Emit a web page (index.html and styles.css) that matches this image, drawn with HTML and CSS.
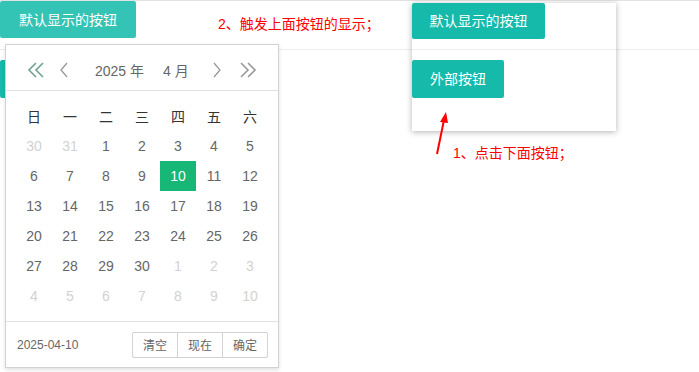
FILE: index.html
```html
<!DOCTYPE html>
<html lang="zh-CN">
<head>
<meta charset="utf-8">
<title>laydate</title>
<link rel="stylesheet" href="styles.css">
</head>
<body>
<div class="page">
  <div class="top-row">
    <button class="btn btn-hover">默认显示的按钮</button>
    <span class="note note-2">2、触发上面按钮的显示；</span>
  </div>
  <div class="content">
    <button class="btn">外部按钮</button>
  </div>
</div>

<div class="popup">
  <div class="popup-top"><button class="btn btn-short">默认显示的按钮</button></div>
  <div class="popup-body"><button class="btn">外部按钮</button></div>
</div>

<svg class="arrow" width="20" height="50" viewBox="0 0 20 50">
  <line x1="3" y1="46" x2="10" y2="12" stroke="#ff0000" stroke-width="2"/>
  <polygon points="12,4 6,14 14,15" fill="#ff0000"/>
</svg>
<span class="note note-1">1、点击下面按钮；</span>

<div class="laydate">
  <div class="ld-header">
    <span class="ld-icon ld-prev-y">
      <svg width="18" height="16" viewBox="0 0 18 16"><polyline points="9,1 2,8 9,15" fill="none" stroke="#6fa28f" stroke-width="1.6"/><polyline points="16,1 9,8 16,15" fill="none" stroke="#6fa28f" stroke-width="1.6"/></svg>
    </span>
    <span class="ld-icon ld-prev-m">
      <svg width="10" height="16" viewBox="0 0 10 16"><polyline points="8,1 2,8 8,15" fill="none" stroke="#999" stroke-width="1.3"/></svg>
    </span>
    <span class="ld-title"><span class="ld-y">2025 年</span><span class="ld-m">4 月</span></span>
    <span class="ld-icon ld-next-m">
      <svg width="10" height="16" viewBox="0 0 10 16"><polyline points="2,1 8,8 2,15" fill="none" stroke="#999" stroke-width="1.3"/></svg>
    </span>
    <span class="ld-icon ld-next-y">
      <svg width="18" height="16" viewBox="0 0 18 16"><polyline points="2,1 9,8 2,15" fill="none" stroke="#999" stroke-width="1.6"/><polyline points="9,1 16,8 9,15" fill="none" stroke="#999" stroke-width="1.6"/></svg>
    </span>
  </div>
  <div class="ld-content">
    <div class="ld-grid">
      <span class="wk">日</span><span class="wk">一</span><span class="wk">二</span><span class="wk">三</span><span class="wk">四</span><span class="wk">五</span><span class="wk">六</span>
      <span class="d off">30</span><span class="d off">31</span><span class="d">1</span><span class="d">2</span><span class="d">3</span><span class="d">4</span><span class="d">5</span>
      <span class="d">6</span><span class="d">7</span><span class="d">8</span><span class="d">9</span><span class="d sel">10</span><span class="d">11</span><span class="d">12</span>
      <span class="d">13</span><span class="d">14</span><span class="d">15</span><span class="d">16</span><span class="d">17</span><span class="d">18</span><span class="d">19</span>
      <span class="d">20</span><span class="d">21</span><span class="d">22</span><span class="d">23</span><span class="d">24</span><span class="d">25</span><span class="d">26</span>
      <span class="d">27</span><span class="d">28</span><span class="d">29</span><span class="d">30</span><span class="d off">1</span><span class="d off">2</span><span class="d off">3</span>
      <span class="d off">4</span><span class="d off">5</span><span class="d off">6</span><span class="d off">7</span><span class="d off">8</span><span class="d off">9</span><span class="d off">10</span>
    </div>
  </div>
  <div class="ld-footer">
    <span class="ld-value">2025-04-10</span>
    <div class="ld-btns">
      <span class="ld-btn">清空</span><span class="ld-btn">现在</span><span class="ld-btn">确定</span>
    </div>
  </div>
</div>
</body>
</html>
```

FILE: styles.css
```css
* { box-sizing: border-box; }
html, body { margin: 0; padding: 0; background: #fff; }
body {
  font-family: "Liberation Sans", "Noto Sans CJK SC", sans-serif;
  font-size: 14px;
  color: #333;
  width: 699px;
  height: 372px;
  overflow: hidden;
  position: relative;
}
.page { border-top: 1px solid #e2e2e2; }
.top-row {
  display: flex;
  align-items: flex-start;
  height: 49px;
  border-bottom: 1px solid #eeeeee;
}
.btn {
  display: inline-flex;
  align-items: center;
  justify-content: center;
  height: 38px;
  padding: 0 18px;
  border: none;
  border-radius: 2px;
  background: #16baaa;
  color: #fff;
  font-family: inherit;
  font-size: 14px;
  line-height: 1;
  white-space: nowrap;
  cursor: pointer;
}
.btn-hover { background: #33c4b6; width: 136px; height: 37px; }
.btn-short { height: 36px; width: 133px; }
.note { color: #ff0000; font-size: 14px; line-height: 16px; white-space: nowrap; }
.note-2 { margin-left: 82px; margin-top: 15px; }
.content { padding-top: 10px; }

.popup {
  position: absolute;
  left: 412px;
  top: 3px;
  width: 204px;
  height: 128px;
  background: #fff;
  box-shadow: 0 1px 6px rgba(0,0,0,0.3);
}
.popup-top { height: 47px; border-bottom: 1px solid #eeeeee; }
.popup-body { padding-top: 10px; }

.arrow { position: absolute; left: 434px; top: 108px; }
.note-1 { position: absolute; left: 453px; top: 145px; }

.laydate {
  position: absolute;
  left: 5px;
  top: 44px;
  width: 274px;
  border: 1px solid #d2d2d2;
  background: #fff;
  box-shadow: 0 2px 4px rgba(0,0,0,0.12);
  color: #666;
}
.ld-header {
  height: 46px;
  border-bottom: 1px solid #e2e2e2;
  display: flex;
  align-items: center;
  padding-top: 5px;
  position: relative;
}
.ld-icon { display: flex; align-items: center; }
.ld-icon svg { display: block; }
.ld-prev-y { margin-left: 21px; }
.ld-prev-m { margin-left: 14px; }
.ld-title { margin-left: 26px; display: flex; gap: 19px; font-size: 14px; color: #666; }
.ld-next-m { margin-left: 23px; }
.ld-next-y { margin-left: 17px; }

.ld-content { padding: 10px; }
.ld-grid {
  display: grid;
  grid-template-columns: repeat(7, 36px);
  grid-auto-rows: 30px;
}
.wk, .d {
  display: flex;
  align-items: center;
  justify-content: center;
  font-size: 14px;
}
.wk { color: #333; }
.d { color: #666; }
.d.off { color: #d2d2d2; }
.d.sel { background: #16b777; color: #fff; }

.ld-footer {
  height: 46px;
  border-top: 1px solid #e2e2e2;
  display: flex;
  align-items: center;
  justify-content: space-between;
  padding: 0 10px 0 11px;
}
.ld-value { font-size: 12px; color: #666; }
.ld-btns { display: flex; }
.ld-btn {
  display: flex;
  align-items: center;
  justify-content: center;
  height: 26px;
  width: 46px;
  border: 1px solid #d2d2d2;
  margin-left: -1px;
  font-size: 12px;
  color: #666;
  background: #fff;
}
.ld-btn:first-child { border-radius: 2px 0 0 2px; }
.ld-btn:last-child { border-radius: 0 2px 2px 0; }
```
